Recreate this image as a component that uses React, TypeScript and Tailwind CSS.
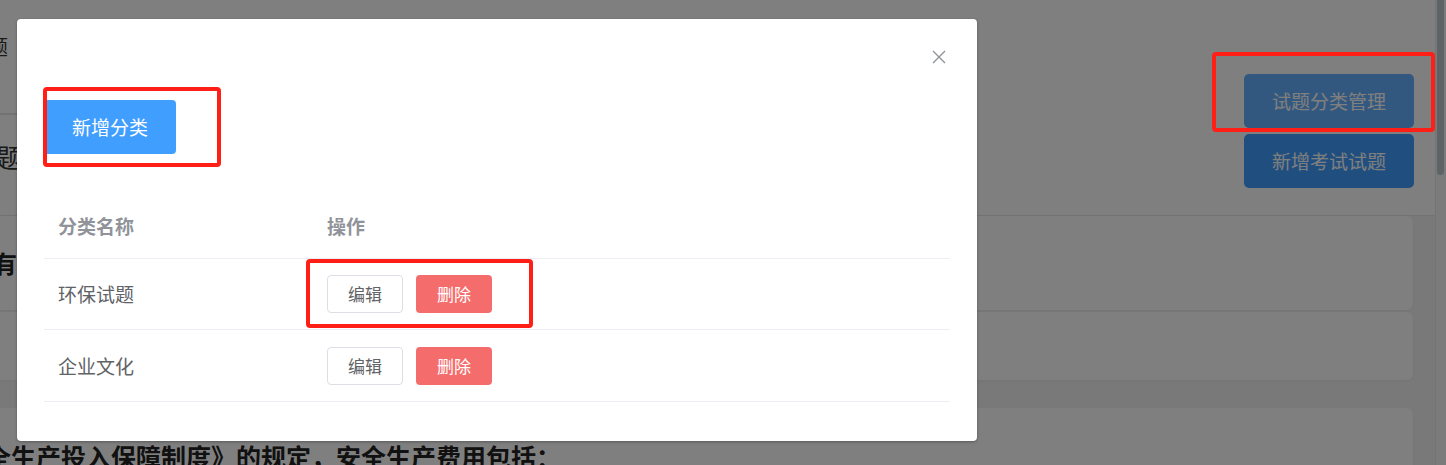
import React from "react";

function Row({ name, last }: { name: string; last?: boolean }) {
  return (
    <div
      className={`flex items-center border-b border-[#ebeef5] ${last ? "h-[72px]" : "h-[71px]"}`}
    >
      <div className="w-[269px] pl-[14px] text-[19px] leading-[26px] text-[#606266]">{name}</div>
      <div className="flex-1 pl-[14px] flex items-center gap-[13px]">
        <button className="w-[76px] h-[38px] rounded-[4px] border border-[#dcdfe6] bg-white text-[17px] leading-[22px] text-[#606266]">
          编辑
        </button>
        <button className="w-[76px] h-[38px] rounded-[4px] bg-[#f56c6c] text-[17px] leading-[22px] text-white">
          删除
        </button>
      </div>
    </div>
  );
}

export default function App() {
  return (
    <div className="relative w-[1446px] h-[465px] overflow-hidden bg-white flex font-['Noto_Sans_CJK_SC',sans-serif]">
      {/* page behind the mask */}
      <div className="w-[1435px] h-[465px] flex flex-col overflow-hidden">
        <div className="flex h-[215px] shrink-0">
          <div className="flex-1 flex flex-col">
            <div className="w-[900px] h-[115px] shrink-0 border-b-2 border-[#e4e4e4] pt-[33px]">
              <span className="block -ml-[12px] text-[20px] leading-[28px] text-[#333333]">题</span>
            </div>
            <div className="pt-[24px]">
              <span className="block -ml-[4px] text-[26px] leading-[36px] text-[#333333]">题</span>
            </div>
          </div>
          <div className="w-[191px] pt-[74px] pr-[21px] flex flex-col gap-[6px]">
            <button className="w-[170px] h-[54px] rounded-[5px] bg-[#66b1ff] text-white text-[19px] leading-[26px]">
              试题分类管理
            </button>
            <button className="w-[170px] h-[54px] rounded-[5px] bg-[#409eff] text-white text-[19px] leading-[26px]">
              新增考试试题
            </button>
          </div>
        </div>
        <div className="flex-1 bg-[#f3f3f3] border-t border-[#e6e6e6] pr-[22px] flex flex-col">
          <div className="shrink-0 -ml-[10px] h-[94px] bg-white rounded-[6px] flex items-center shadow-[0_1px_3px_rgba(0,0,0,0.06)]">
            <span className="block ml-[3px] text-[24px] leading-[32px] font-bold text-[#222222]">有</span>
          </div>
          <div className="shrink-0 -ml-[10px] mt-[2px] h-[68px] bg-white rounded-[6px] shadow-[0_1px_3px_rgba(0,0,0,0.06)]" />
          <div className="shrink-0 -ml-[10px] mt-[28px] h-[100px] bg-white rounded-[6px] pt-[32px] shadow-[0_1px_3px_rgba(0,0,0,0.06)]">
            <span className="block -ml-[4px] text-[25px] leading-[32px] font-bold text-[#222222] whitespace-nowrap">
              全生产投入保障制度》的规定，安全生产费用包括：
            </span>
          </div>
        </div>
      </div>
      {/* scrollbar */}
      <div className="w-[11px] h-full border-l border-[#e8e8e8] bg-[#f6f6f6] pl-[1px] pt-0">
        <div className="w-[7px] h-[175px] rounded-b-[4px] bg-[#bcc8cc]" />
      </div>

      {/* mask */}
      <div className="absolute inset-0 bg-black/50" />

      {/* dialog */}
      <div className="absolute left-[17px] top-[19px] w-[960px] h-[422px] bg-white rounded-[4px] shadow-[0_1px_3px_rgba(0,0,0,0.3)] px-[27px] pt-[81px]">
        <button className="absolute right-[31px] top-[31px] w-[14px] h-[14px] text-[#909399]">
          <svg viewBox="0 0 14 14" width="14" height="14" fill="none" stroke="currentColor" strokeWidth="1.4">
            <path d="M1 1 L13 13 M13 1 L1 13" />
          </svg>
        </button>
        <button className="w-[132px] h-[54px] rounded-[4px] bg-[#409eff] text-white text-[19px] leading-[26px]">
          新增分类
        </button>
        <div className="mt-[40px]">
          <div className="flex items-center h-[65px] border-b border-[#ebeef5] text-[19px] leading-[26px] font-bold text-[#909399]">
            <div className="w-[269px] pl-[14px]">分类名称</div>
            <div className="flex-1 pl-[14px]">操作</div>
          </div>
          <Row name="环保试题" />
          <Row name="企业文化" last />
        </div>
      </div>

      {/* annotation boxes */}
      <div className="absolute left-[43px] top-[87px] w-[178px] h-[80px] border-4 border-[#ff1f16] rounded-[4px]" />
      <div className="absolute left-[306px] top-[259px] w-[227px] h-[69px] border-4 border-[#ff1f16] rounded-[4px]" />
      <div className="absolute left-[1212px] top-[52px] w-[223px] h-[80px] border-4 border-[#ff1f16] rounded-[4px]" />
    </div>
  );
}
